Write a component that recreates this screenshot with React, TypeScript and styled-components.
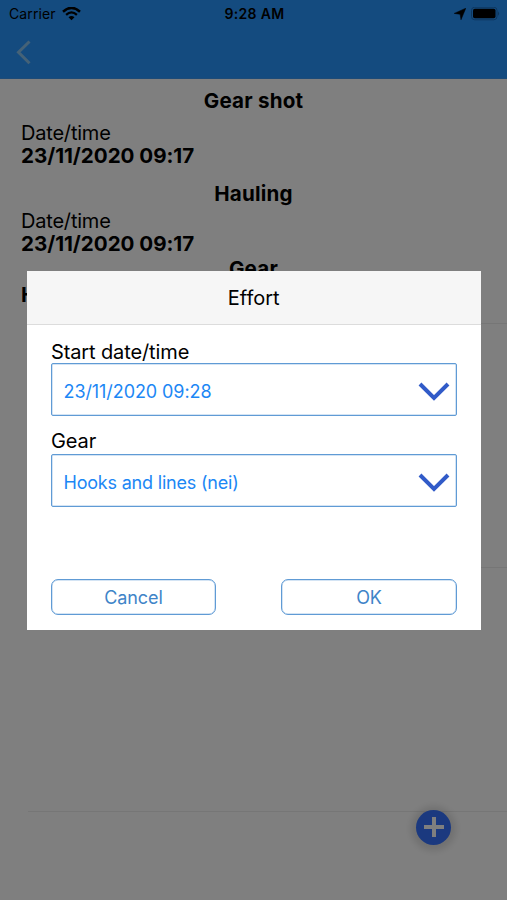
import React from "react";
import styled, { createGlobalStyle } from "styled-components";

const GlobalStyle = createGlobalStyle`
  * { box-sizing: border-box; }
  body { margin: 0; background: #fff; }
`;

const Screen = styled.div`
  position: relative;
  width: 507px;
  height: 900px;
  overflow: hidden;
  background: #fff;
  color: #000;
  font-family: Inter, "Liberation Sans", sans-serif;
`;

const Header = styled.header`
  height: 79px;
  background: #2896ff;
  border-bottom: 1px solid #3c96ee;
`;

const StatusBar = styled.div`
  display: grid;
  grid-template-columns: 1fr auto 1fr;
  align-items: center;
  height: 27px;
  padding: 0 7px 0 9px;
  font-size: 14px;
`;

const StatusGroup = styled.div<{ $end?: boolean }>`
  display: flex;
  align-items: center;
  justify-content: ${(p) => (p.$end ? "flex-end" : "flex-start")};
  gap: ${(p) => (p.$end ? 5 : 6)}px;
`;

const Carrier = styled.span`
  letter-spacing: 0.1px;
`;

const Clock = styled.span`
  font-weight: 600;
  font-size: 14px;
  letter-spacing: 0.35px;
`;

const BackButton = styled.button`
  display: flex;
  margin: 13px 0 0 16px;
  padding: 0;
  border: 0;
  background: none;
`;

const Content = styled.main`
  height: 821px;
  overflow: hidden;
`;

const Section = styled.section<{ $height: number }>`
  height: ${(p) => p.$height}px;
  padding: 9px 0 0 21px;
`;

const SectionTitle = styled.h2<{ $gap: number }>`
  margin: 0 0 ${(p) => p.$gap}px -21px;
  font-size: 20.6px;
  line-height: 26px;
  font-weight: 700;
  letter-spacing: 0.2px;
  text-align: center;
`;

const FieldName = styled.div`
  font-size: 20px;
  line-height: 23px;
  letter-spacing: -0.2px;
`;

const FieldValue = styled.div`
  font-size: 20.6px;
  line-height: 22px;
  font-weight: 700;
  letter-spacing: -0.03px;
`;

const Rows = styled.div`
  margin-left: 28px;
`;

const Row = styled.div<{ $height: number }>`
  height: ${(p) => p.$height}px;
  border-top: 1px solid #ececec;
`;

const AddButton = styled.button`
  position: absolute;
  left: 416px;
  top: 809.5px;
  display: flex;
  align-items: center;
  justify-content: center;
  width: 35px;
  height: 35px;
  padding: 0;
  border: 0;
  border-radius: 50%;
  background: #3673ff;
  box-shadow: 0 1px 7px 5px rgba(0, 0, 0, 0.12);
`;

const Backdrop = styled.div`
  position: absolute;
  inset: 0;
  background: rgba(0, 0, 0, 0.5);
`;

const Dialog = styled.div`
  position: absolute;
  left: 26.5px;
  top: 270.5px;
  width: 454.5px;
  height: 359.5px;
  background: #fff;
`;

const DialogTitle = styled.div`
  display: flex;
  align-items: center;
  justify-content: center;
  height: 54px;
  padding-top: 2px;
  background: #f6f6f6;
  border-bottom: 1px solid #dcdcdc;
  font-size: 20px;
`;

const DialogBody = styled.div`
  padding: 15px 24px 0 24.5px;
`;

const Label = styled.div<{ $lineHeight: number }>`
  height: 23px;
  font-size: 20px;
  line-height: ${(p) => p.$lineHeight}px;
  letter-spacing: -0.12px;
`;

const Select = styled.div`
  display: flex;
  align-items: center;
  justify-content: space-between;
  height: 53px;
  margin-bottom: 15px;
  padding: 3px 6px 0 11px;
  border: 1px solid #609bd5;
  box-shadow: inset 0 0 0 0.5px #a9c9e9;
  border-radius: 2px;
  color: #1c87f5;
  font-size: 18px;
`;

const Value = styled.span<{ $spacing: number }>`
  padding: 1px 0 0 0.5px;
  letter-spacing: ${(p) => p.$spacing}px;
`;

const Actions = styled.div`
  display: grid;
  grid-template-columns: 165px 176px;
  justify-content: space-between;
  margin-top: 72px;
`;

const ActionButton = styled.button`
  height: 36.5px;
  padding: 1.5px 0 0;
  border: 1px solid #609bd5;
  box-shadow: inset 0 0 0 0.5px #a9c9e9;
  border-radius: 7px;
  background: #fff;
  color: #4084c8;
  font-family: inherit;
  font-size: 18px;
  letter-spacing: -0.1px;
`;

const DownIcon = () => (
  <svg width="32" height="20" viewBox="0 0 32 20" fill="none">
    <path d="M2 3 16 17 30 3" stroke="#315bc8" strokeWidth="4" />
  </svg>
);

const WifiIcon = () => (
  <svg width="19" height="14" viewBox="0 0 19 14" fill="none" stroke="#000">
    <path d="M1 4.7Q9.5-3 18 4.7" strokeWidth="2.5" />
    <path d="M4.1 7.9Q9.5 2.9 14.9 7.9" strokeWidth="2.3" />
    <path d="M6.5 10.3Q9.5 7.6 12.5 10.3L9.5 13.3Z" fill="#000" stroke="none" />
  </svg>
);

const LocationIcon = () => (
  <svg width="12" height="12" viewBox="0 0 12 12">
    <path d="M11.8.2 7 11.8 6.1 6.3.2 5.4Z" fill="#000" stroke="#000" strokeWidth=".5" />
  </svg>
);

const BatteryIcon = () => (
  <svg width="29" height="14" viewBox="0 0 29 14">
    <rect x=".5" y=".2" width="25.5" height="12.6" rx="3.2" fill="none" stroke="#1b6dbc" />
    <rect x="2" y="1.7" width="22.5" height="9.6" rx="1.8" fill="#000" />
    <path d="M27 4.2Q29.2 6.5 27 8.8Z" fill="#1b6dbc" />
  </svg>
);

const records = [
  { title: "Gear shot", height: 93, gap: 8 },
  { title: "Hauling", height: 75, gap: 3 },
];

export default function App() {
  return (
    <>
      <GlobalStyle />
      <Screen>
        <Header>
          <StatusBar>
            <StatusGroup>
              <Carrier>Carrier</Carrier>
              <WifiIcon />
            </StatusGroup>
            <Clock>9:28 AM</Clock>
            <StatusGroup $end>
              <LocationIcon />
              <BatteryIcon />
            </StatusGroup>
          </StatusBar>
          <BackButton aria-label="Back">
            <svg width="16" height="25" viewBox="0 0 16 25" fill="none">
              <path d="M13.5 1.5 2.5 12.3 13.5 23.2" stroke="#8ac4ee" strokeWidth="3" />
            </svg>
          </BackButton>
        </Header>
        <Content>
          {records.map((r) => (
            <Section key={r.title} $height={r.height}>
              <SectionTitle $gap={r.gap}>{r.title}</SectionTitle>
              <FieldName>Date/time</FieldName>
              <FieldValue>23/11/2020 09:17</FieldValue>
            </Section>
          ))}
          <Section $height={76}>
            <SectionTitle $gap={2}>Gear</SectionTitle>
            <FieldValue>Hooks and lines (nei)</FieldValue>
          </Section>
          <Rows>
            <Row $height={244} />
            <Row $height={244} />
            <Row $height={89} />
          </Rows>
        </Content>
        <AddButton aria-label="Add">
          <svg width="20" height="20" viewBox="0 0 20 20">
            <path d="M10 0V20M0 10H20" stroke="#fff" strokeWidth="4" />
          </svg>
        </AddButton>
        <Backdrop />
        <Dialog role="dialog" aria-label="Effort">
          <DialogTitle>Effort</DialogTitle>
          <DialogBody>
            <Label $lineHeight={24}>Start date/time</Label>
            <Select>
              <Value $spacing={-0.08}>23/11/2020 09:28</Value>
              <DownIcon />
            </Select>
            <Label $lineHeight={21}>Gear</Label>
            <Select>
              <Value $spacing={-0.2}>Hooks and lines (nei)</Value>
              <DownIcon />
            </Select>
            <Actions>
              <ActionButton>Cancel</ActionButton>
              <ActionButton>OK</ActionButton>
            </Actions>
          </DialogBody>
        </Dialog>
      </Screen>
    </>
  );
}
